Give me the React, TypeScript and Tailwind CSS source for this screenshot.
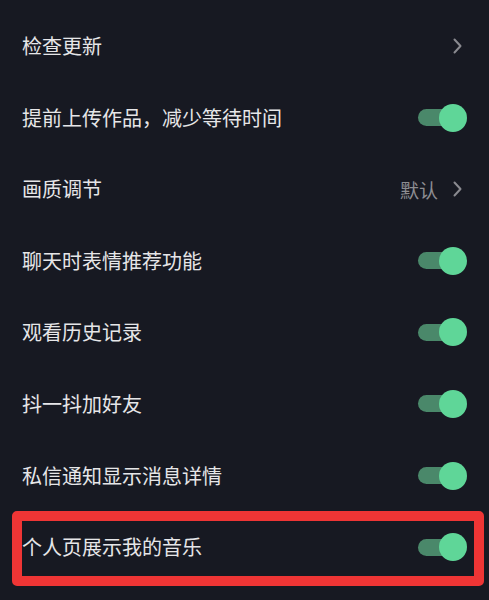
import React from "react";

type Row = { label: string; kind: "chevron" | "toggle"; value?: string };

const rows: Row[] = [
  { label: "检查更新", kind: "chevron" },
  { label: "提前上传作品，减少等待时间", kind: "toggle" },
  { label: "画质调节", kind: "chevron", value: "默认" },
  { label: "聊天时表情推荐功能", kind: "toggle" },
  { label: "观看历史记录", kind: "toggle" },
  { label: "抖一抖加好友", kind: "toggle" },
  { label: "私信通知显示消息详情", kind: "toggle" },
  { label: "个人页展示我的音乐", kind: "toggle" },
];

function Toggle() {
  return (
    <div className="relative w-[49px] h-[28px]">
      <div className="absolute left-0 top-[5.5px] w-[40px] h-[17px] rounded-full bg-[#4a886a]" />
      <div className="absolute right-0 top-0 w-[28px] h-[28px] rounded-full bg-[#5fd698]" />
    </div>
  );
}

function Chevron() {
  return (
    <svg width="9" height="16" viewBox="0 0 9 16" className="mr-[5px]">
      <path d="M1.5 1.5 L7.5 8 L1.5 14.5" fill="none" stroke="#8a8a90" strokeWidth="2" strokeLinecap="round" strokeLinejoin="round" />
    </svg>
  );
}

export default function App() {
  return (
    <div
      className="relative w-[489px] h-[600px] bg-[#171922] overflow-hidden pt-[10.2px]"
      style={{ fontFamily: '"Noto Sans CJK SC", "Noto Sans", sans-serif' }}
    >
      {rows.map((r, i) => (
        <div key={i} className="flex items-center justify-between h-[71.6px] pl-[22px] pr-[22px]">
          <span className="text-[20px] text-[#e6e6e8] leading-none">{r.label}</span>
          {r.kind === "toggle" ? (
            <Toggle />
          ) : (
            <div className="flex items-center gap-[15px]">
              {r.value && <span className="text-[19px] text-[#8d8d92] leading-none">{r.value}</span>}
              <Chevron />
            </div>
          )}
        </div>
      ))}
      <div className="absolute left-[12px] top-[511px] w-[472px] h-[75px] border-[10px] border-[#ef3535] rounded-[5px]" />
    </div>
  );
}
